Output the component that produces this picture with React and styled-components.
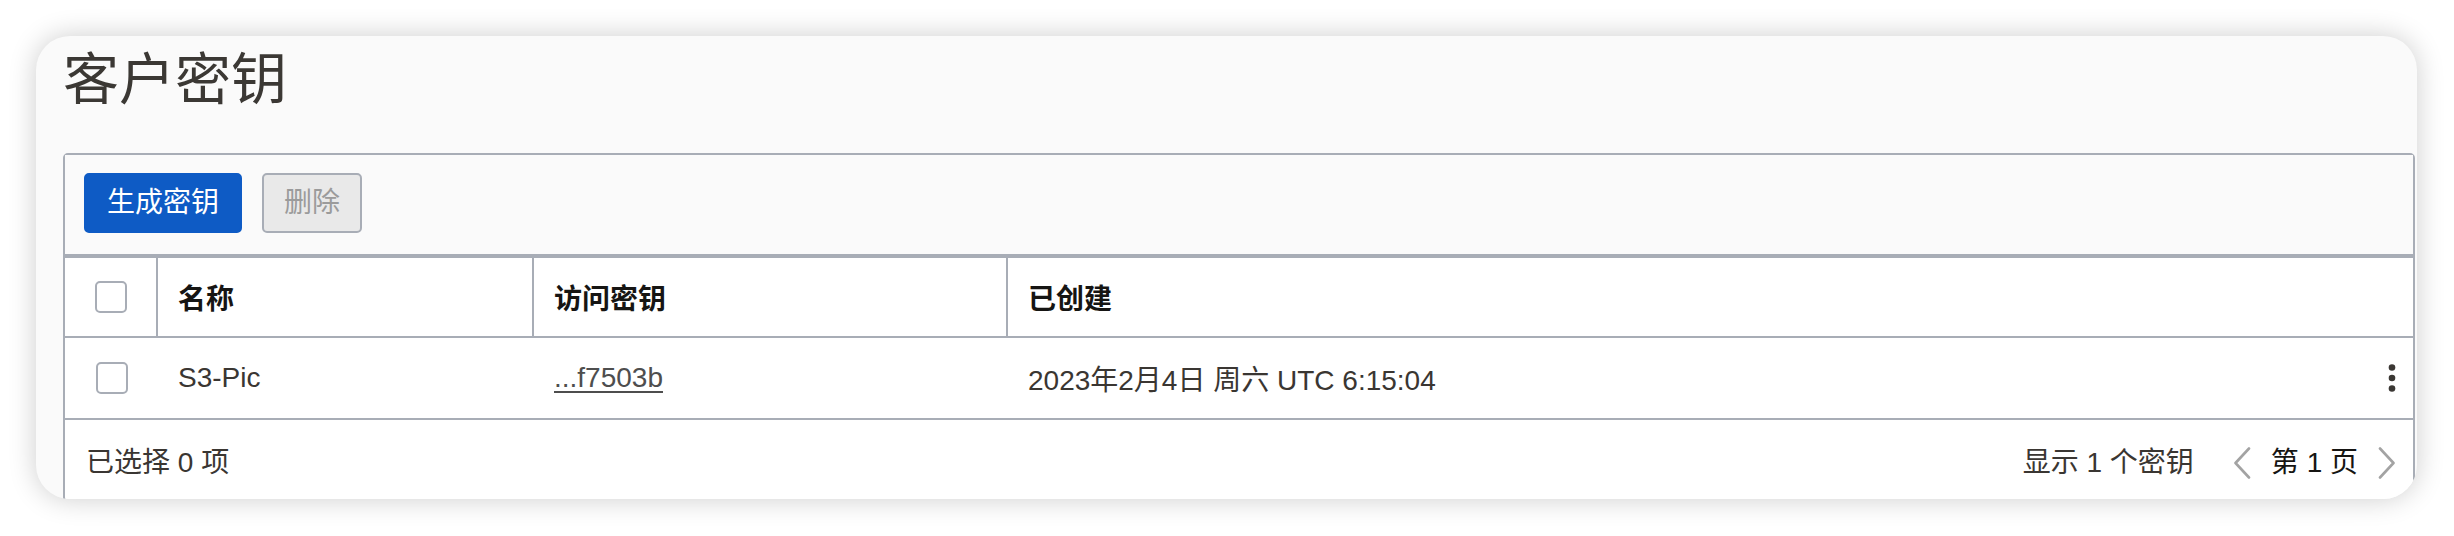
import React from 'react';
import styled, { createGlobalStyle } from 'styled-components';

const GlobalStyle = createGlobalStyle`
  html, body { margin: 0; padding: 0; background: #ffffff; }
  body {
    font-family: "Liberation Sans", "Noto Sans CJK SC", sans-serif;
    color: #3a3632;
  }
  * { box-sizing: border-box; }
`;

const LINE = '#a8adb6';

const Page = styled.div`
  height: 536px;
  padding: 36px 37px 37px 36px;
`;

const Card = styled.section`
  height: 463px;
  border-radius: 34px;
  background: #fafafa;
  box-shadow: 0 0 28px rgba(0, 0, 0, 0.2);
  overflow: hidden;
  padding: 0 2px 0 27px;
  display: flex;
  flex-direction: column;
`;

const Title = styled.h1`
  margin: 12px 0 41px 0;
  font-size: 56px;
  line-height: 64px;
  font-weight: 400;
  color: #3b3834;
`;

const Panel = styled.div`
  flex: none;
  border: 2px solid ${LINE};
  border-radius: 5px;
  background: #ffffff;
  display: flex;
  flex-direction: column;
`;

const Toolbar = styled.div`
  height: 103px;
  display: flex;
  align-items: center;
  gap: 20px;
  padding: 0 19px 4px;
  background: #fafafa;
  border-bottom: 4px solid ${LINE};
`;

const Button = styled.button`
  height: 60px;
  padding: 0 ${(p) => (p.$primary ? 21 : 20)}px;
  border-radius: 5px;
  border: 2px solid ${(p) => (p.$primary ? '#0e5bc5' : LINE)};
  background: ${(p) => (p.$primary ? '#0e5bc5' : '#e9e9e9')};
  color: ${(p) => (p.$primary ? '#ffffff' : '#9b9b9b')};
  font-family: inherit;
  font-size: 28px;
  line-height: 1;
  cursor: ${(p) => (p.disabled ? 'default' : 'pointer')};
`;

const Row = styled.div`
  display: grid;
  grid-template-columns: 93px 376px 474px 1fr 42px;
  height: ${(p) => (p.$head ? 80 : 82)}px;
  border-bottom: 2px solid ${LINE};
`;

const Cell = styled.div`
  display: flex;
  align-items: center;
  justify-content: ${(p) => (p.$center ? 'center' : 'flex-start')};
  padding: ${(p) => (p.$center ? '0' : '0 20px')};
  border-right: ${(p) => (p.$divider ? `2px solid ${LINE}` : 'none')};
  font-size: 28px;
  font-weight: ${(p) => (p.$head ? 700 : 400)};
  color: ${(p) => (p.$head ? '#161513' : '#3a3632')};
  white-space: nowrap;
`;

const Checkbox = styled.span`
  display: block;
  width: 32px;
  height: 32px;
  border: 2px solid ${LINE};
  border-radius: 5px;
  background: #ffffff;
`;

const KeyLink = styled.a`
  color: #4e4e4e;
  text-decoration: underline;
  text-underline-offset: 4px;
  text-decoration-thickness: 2px;
  cursor: pointer;
`;

const Footer = styled.div`
  height: 80px;
  display: flex;
  align-items: center;
  justify-content: space-between;
  padding: 0 16px 0 21px;
  font-size: 28px;
  color: #3a3632;
`;

const FooterRight = styled.div`
  display: flex;
  align-items: center;
`;

const Count = styled.span`
  margin-right: 38px;
`;

const Pager = styled.div`
  display: flex;
  align-items: center;
  gap: 19px;
`;

const PageLabel = styled.span`
  color: #161513;
`;

const NavButton = styled.span`
  display: flex;
  align-items: center;
  height: 32px;
  margin-top: 6px;
`;

const Chevron = ({ dir }) => (
  <svg width="20" height="32" viewBox="0 0 20 32" fill="none">
    <polyline
      points={dir === 'left' ? '17,1.5 3.5,16 17,30.5' : '3,1.5 16.5,16 3,30.5'}
      stroke="#a3a3a3"
      strokeWidth="2.6"
      strokeLinecap="round"
      strokeLinejoin="round"
    />
  </svg>
);

const Kebab = () => (
  <svg width="8" height="30" viewBox="0 0 8 30">
    <circle cx="4" cy="4.5" r="3.3" fill="#3b3834" />
    <circle cx="4" cy="15" r="3.3" fill="#3b3834" />
    <circle cx="4" cy="25.5" r="3.3" fill="#3b3834" />
  </svg>
);

export default function App() {
  return (
    <>
      <GlobalStyle />
      <Page>
        <Card>
          <Title>客户密钥</Title>
          <Panel>
            <Toolbar>
              <Button $primary>生成密钥</Button>
              <Button disabled>删除</Button>
            </Toolbar>
            <Row $head>
              <Cell $center $divider>
                <Checkbox />
              </Cell>
              <Cell $head $divider>名称</Cell>
              <Cell $head $divider>访问密钥</Cell>
              <Cell $head>已创建</Cell>
              <Cell $center />
            </Row>
            <Row>
              <Cell $center $divider={false}>
                <Checkbox />
              </Cell>
              <Cell>S3-Pic</Cell>
              <Cell>
                <KeyLink>...f7503b</KeyLink>
              </Cell>
              <Cell>2023年2月4日 周六 UTC 6:15:04</Cell>
              <Cell $center>
                <Kebab />
              </Cell>
            </Row>
            <Footer>
              <span>已选择 0 项</span>
              <FooterRight>
                <Count>显示 1 个密钥</Count>
                <Pager>
                  <NavButton>
                    <Chevron dir="left" />
                  </NavButton>
                  <PageLabel>第 1 页</PageLabel>
                  <NavButton>
                    <Chevron dir="right" />
                  </NavButton>
                </Pager>
              </FooterRight>
            </Footer>
          </Panel>
        </Card>
      </Page>
    </>
  );
}
